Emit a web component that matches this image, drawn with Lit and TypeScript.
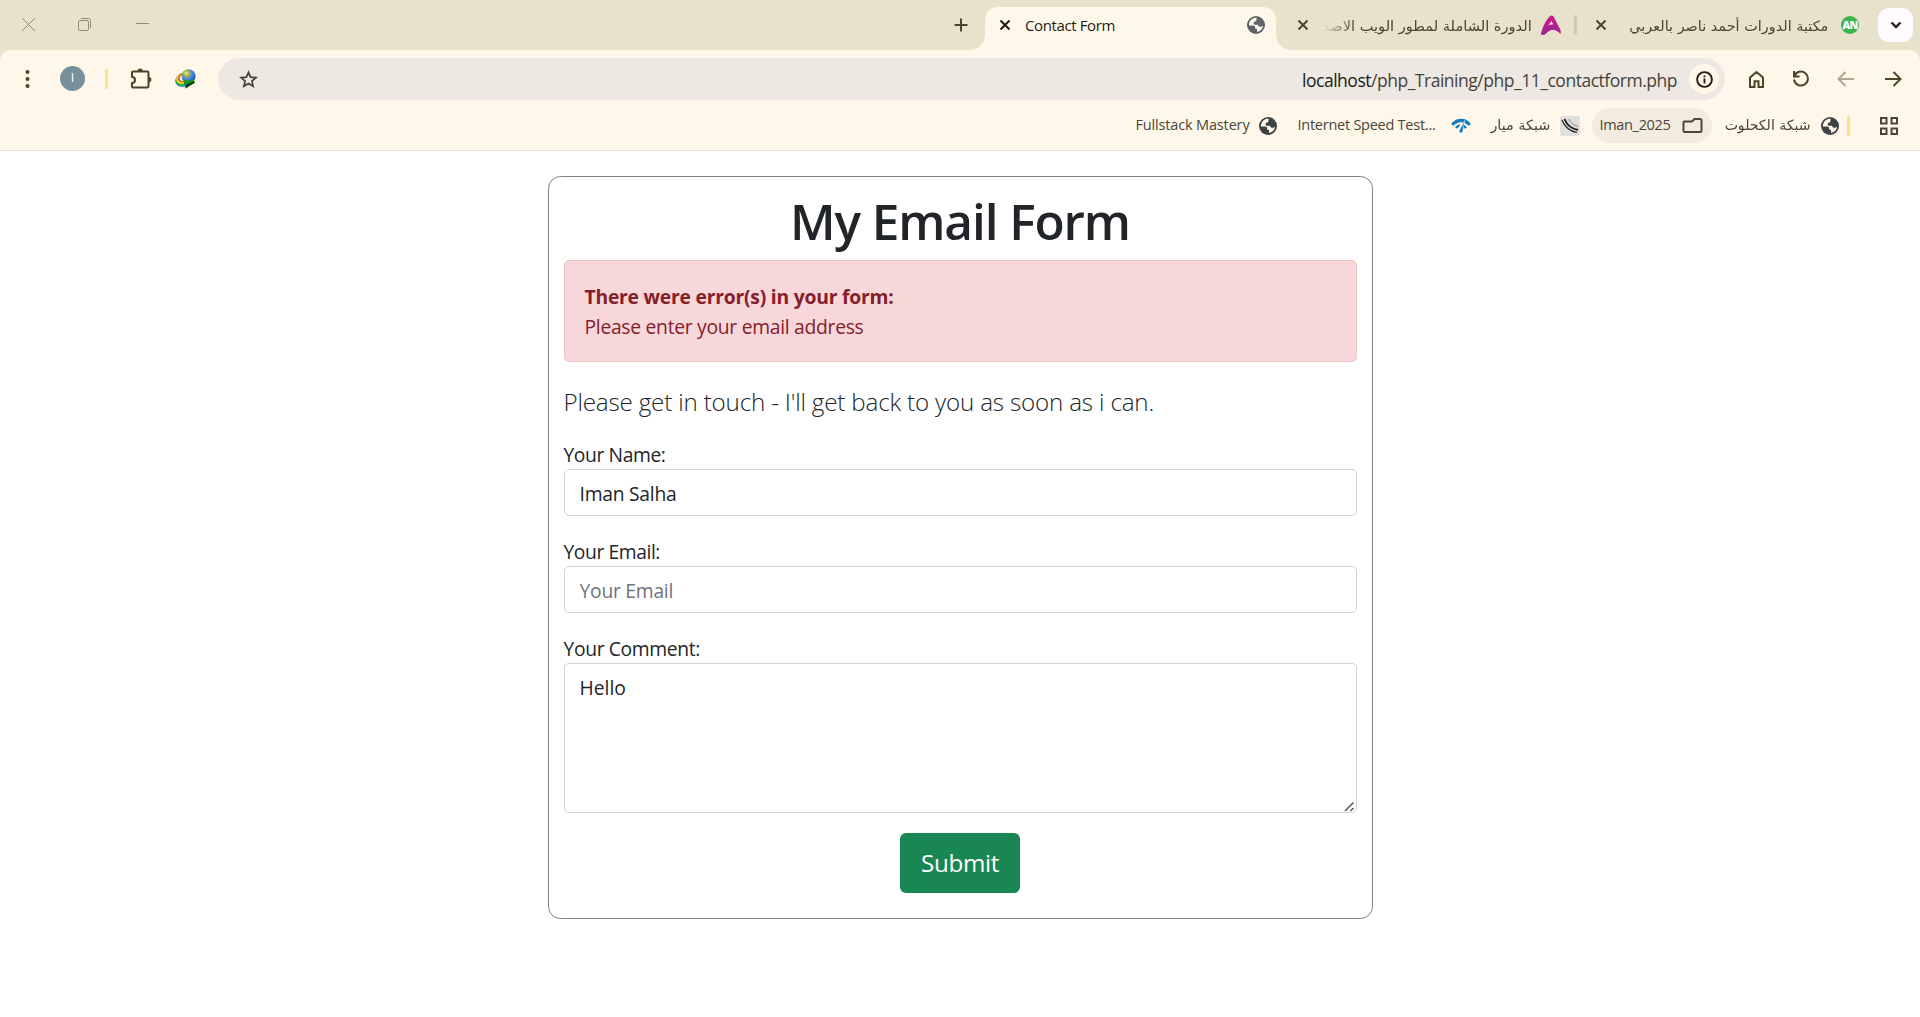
import { LitElement, html, css } from "lit";
import { customElement, property } from "lit/decorators.js";

/** Text run set to an exact advance width: Latin by tracking, Arabic by horizontal scale. */
@customElement("fit-text")
class FitText extends LitElement {
  @property({ type: Number }) w = 0;
  @property({ type: Boolean }) scale = false;
  static styles = css`
    :host { display: block; white-space: nowrap; flex: none; }
    .run { display: inline-block; transform-origin: 0 50%; white-space: pre; }
    :host([scale]) .run { transform-origin: 100% 50%; }
  `;
  render() {
    return html`<span class="run"><slot></slot></span>`;
  }
  firstUpdated() {
    this.fit();
    document.fonts.ready.then(() => this.fit());
  }
  private fit() {
    const run = this.renderRoot.querySelector(".run") as HTMLElement;
    const n = (this.textContent || "").length;
    run.style.letterSpacing = "normal";
    run.style.transform = "none";
    const natural = run.getBoundingClientRect().width;
    if (!natural) return;
    if (this.scale) run.style.transform = `scaleX(${this.w / natural})`;
    else run.style.letterSpacing = `${(this.w - natural) / n}px`;
    this.style.width = `${this.w}px`;
  }
}

const globe = (color: string, bg: string) => html`<svg class="ico" width="18" height="18" viewBox="0 0 18 18">
  <circle cx="9" cy="9" r="9" fill=${color} />
  <path fill=${bg} d="M9.800 1.900C6.500 1.500 3.800 3.300 2.600 5.800C2 7.200 1.800 8.500 2 9.600H5.800C7.400 9.600 8.200 10.400 8.200 11.900V12.800H10V15.900C13.300 15.500 15.900 12.800 16 9.800C15.200 10.500 14.600 10.800 13.700 10.800C12.100 10.800 11.200 9.900 11 8.700H7.600C6.900 8.700 6.600 8.300 6.600 7.600C6.600 6 7.600 5.300 9 5.300H9.300V3.700Z" />
</svg>`;

const cross = html`<svg class="ico" width="12" height="12" viewBox="0 0 12 12"><path d="M1.500 1.500L10.500 10.500M10.500 1.500L1.500 10.500" stroke="currentColor" stroke-width="2" fill="none" /></svg>`;

@customElement("tab-strip")
class TabStrip extends LitElement {
  static styles = css`
    :host { display: flex; height: 50px; align-items: center; background: #e8e2ca; color: #4b4532; font-size: 15px; line-height: 20px; }
    .ico { display: block; flex: none; }
    .win { display: flex; gap: 42px; padding-left: 21px; margin-top: -1px; color: #918b7a; }
    .plus { margin-left: 804px; color: #4b4532; }
    .tab { display: flex; align-items: center; }
    .active { position: relative; margin-left: 17px; width: 290.5px; height: 43px; margin-top: 7px; box-sizing: border-box; padding: 0 11px 7px 14px; background: #fff8ea; border-radius: 13px 13px 0 0; color: #1f1c13; }
    .active::before, .active::after { content: ""; position: absolute; bottom: 0; width: 15px; height: 15px; }
    .active::before { left: -15px; background: radial-gradient(circle at 0 0, transparent 14.500px, #fff8ea 15.200px); }
    .active::after { right: -15px; background: radial-gradient(circle at 100% 0, transparent 14.500px, #fff8ea 15.200px); }
    .active .title { margin-left: 14px; margin-right: auto; }
    .second { margin-left: 21.500px; }
    .second .title { margin-left: 14px; margin-right: 9px; -webkit-mask-image: linear-gradient(90deg, transparent, #000 32px); }
    .sep { width: 3px; height: 20px; border-radius: 2px; background: #d0c9ba; margin: 0 18px 0 13px; }
    .third .title { margin-left: 22px; margin-right: 13px; }
    .ar { font-family: "DejaVu Sans", sans-serif; font-size: 14px; direction: rtl; margin-top: 1px; }
    .an { width: 18px; height: 18px; border-radius: 50%; background: #3bb54a; color: #fff; font: 800 10.500px/18px "Open Sans", sans-serif; text-align: center; letter-spacing: -0.8px; }
    .drop { display: grid; place-items: center; width: 35px; height: 34px; border-radius: 11px; background: #fffbff; margin-left: 19px; color: #1f1c13; }
  `;
  render() {
    return html`
      <div class="win">
        <svg class="ico" width="15" height="15" viewBox="0 0 15 15"><path d="M1 1L14 14M14 1L1 14" stroke="currentColor" fill="none" /></svg>
        <svg class="ico" width="15" height="15" viewBox="0 0 15 15"><g stroke="currentColor" fill="none"><rect x="0.500" y="3.500" width="10" height="10" rx="1.500" /><path d="M3 1.500H10.500Q12.500 1.500 12.500 3.500V11" /></g></svg>
        <svg class="ico" width="15" height="15" viewBox="0 0 15 15"><path d="M1 6.500H14" stroke="currentColor" /></svg>
      </div>
      <svg class="ico plus" width="14" height="14" viewBox="0 0 14 14"><path d="M7 .5V13.500M.5 7H13.500" stroke="currentColor" stroke-width="2" /></svg>
      <div class="tab active">${cross}<fit-text class="title" w="90">Contact Form</fit-text>${globe("#5f6368", "#fff8ea")}</div>
      <div class="tab second">${cross}<fit-text class="title ar" scale w="209">الدورة الشاملة لمطور الويب الاصد</fit-text>
        <svg class="ico" width="20" height="20" viewBox="0 0 20 20">
          <path d="M0 19C1 13 5 5 9 1C10.500 0 12 .5 12.800 2L19 14C20 16 20 17.500 19.500 19C15 13.500 10 13.500 5 18.500C3 20 1 20 0 19Z" fill="#c41a8c" />
          <path d="M0 19C1 14 7 9 12 9.500C15 10 17.500 13 19.500 19C15 13 9 13 5 18.500C3 20 1 20 0 19Z" fill="#a3238e" />
          <path d="M7.500 10.500L10.300 6L12.400 9.600C10.500 9.300 9 9.600 7.500 10.500Z" fill="#e8e2ca" />
        </svg>
      </div>
      <i class="sep"></i>
      <div class="tab third">${cross}<fit-text class="title ar" scale w="199">مكتبة الدورات أحمد ناصر بالعربي</fit-text><span class="an">AN</span></div>
      <div class="drop"><svg width="12" height="8" viewBox="0 0 12 8"><path d="M1.500 1.500L6 6L10.500 1.500" stroke="currentColor" stroke-width="2.400" fill="none" /></svg></div>
    `;
  }
}

@customElement("tool-bar")
class ToolBar extends LitElement {
  static styles = css`
    :host { display: block; height: 101px; box-sizing: border-box; border-bottom: 1px solid #e6e1d2; background: #fff8ea; border-radius: 11px 11px 0 0; color: #4b4529; }
    .ico { display: block; flex: none; }
    .row { display: flex; align-items: center; height: 58px; box-sizing: border-box; }
    .dots { margin-left: 25px; }
    .avatar { width: 25px; height: 25px; margin-top: -1px; border-radius: 50%; background: #78909c; color: #fff; margin-left: 30px; font: 12.500px/24px "Open Sans", sans-serif; text-align: center; }
    .bar { width: 3px; height: 20px; background: #f5e384; border-radius: 1px; margin-left: 20px; }
    .puzzle { margin-left: 22px; }
    .idm { margin-left: 23px; }
    .omni { display: flex; align-items: center; flex: none; width: 1507px; height: 42px; box-sizing: border-box; border-radius: 21px; background: #ede8e1; margin: 0 23px 0 22px; padding: 0 6px 0 20.500px; color: #45423a; font-size: 17.500px; line-height: 24px; }
    .url { margin-left: auto; display: flex; margin-top: 1px; }
    .host { color: #1a1a17; }
    .info { display: grid; place-items: center; width: 30px; height: 30px; border-radius: 50%; background: #fff8ea; color: #1f1c13; margin-left: 12px; }
    .g { margin-right: 26.500px; }
    .back { opacity: 0.45; }
    .marks { display: flex; align-items: center; justify-content: flex-end; height: 35px; font-size: 14.500px; line-height: 20px; color: #4a4639; }
    .mark { display: flex; align-items: center; gap: 9px; }
    .mark fit-text { margin-top: -1px; }
    .ar { font-family: "DejaVu Sans", sans-serif; font-size: 14px; direction: rtl; }
    .m2 { margin-left: 21px; gap: 15px; }
    .m3 { margin-left: 20px; }
    .m4 { box-sizing: border-box; width: 120px; height: 35px; border-radius: 17.500px; background: #f2ebdf; padding-left: 8px; gap: 11px; margin-left: 12px; }
    .m5 { margin-left: 13.500px; gap: 10px; }
    .marks .bar { margin-left: 8px; }
    .apps { margin: 0 22.500px 0 29.500px; }
  `;
  render() {
    return html`
      <div class="row">
        <svg class="ico dots" width="5" height="18" viewBox="0 0 5 18"><g fill="currentColor"><circle cx="2.500" cy="2" r="2" /><circle cx="2.500" cy="9" r="2" /><circle cx="2.500" cy="16" r="2" /></g></svg>
        <span class="avatar">I</span><i class="bar"></i>
        <svg class="ico puzzle" width="22" height="22" viewBox="0 0 22 22">
          <path d="M2 4.500Q2 3.500 3 3.500H17.500Q18.500 3.500 18.500 4.500V18.500Q18.500 19.500 17.500 19.500H3Q2 19.500 2 18.500V15.200C6 14.700 6 9.300 2 8.800Z" fill="none" stroke="currentColor" stroke-width="2" />
          <path d="M7.500 3a2.700 2.600 0 0 1 5.400 0ZM19 8.900a2.400 2.700 0 0 1 0 5.400Z" fill="currentColor" />
        </svg>
        <svg class="ico idm" width="21" height="20" viewBox="0 0 21 20">
          <defs>
            <radialGradient id="ball" cx=".35" cy=".3" r=".8"><stop offset="0" stop-color="#eef0b0" /><stop offset=".28" stop-color="#9aae3a" /><stop offset=".5" stop-color="#4f8ce6" /><stop offset="1" stop-color="#123a9c" /></radialGradient>
          </defs>
          <path d="M7.500 4C3 5 0 9 .3 13C1 17 5 18.500 10 17.500L13 12L8 11Z" fill="#2878c8" />
          <path d="M7.500 4C3 5 .3 9 .8 12.500C1.500 15.500 5 17.500 9 16.500L10 12Z" fill="#2eb52b" />
          <path d="M7.500 4C3 5 .5 8.500 1.500 11.500C2.500 14.500 6 15.500 9 14.500V11Z" fill="#f5df25" />
          <path d="M7.500 4.300C4 5.200 2.200 8.500 3 10.800C4 13 7 14 9 13V9Z" fill="#e85d27" />
          <path d="M7 5.800C5 7 4.300 9 5 10.500C6 12 8 12.500 9 12V8Z" fill="#fff" />
          <circle cx="13.500" cy="7.200" r="7" fill="url(#ball)" />
          <path d="M8.500 9.500C12 12.500 15.500 12 18 10L20 13.500L10.500 19.500V15.800C9 14 8.500 12 8.500 9.500Z" fill="#159b18" />
          <path d="M10.500 19.500V16L18.500 12L20 13.500Z" fill="#0a4410" />
        </svg>
        <div class="omni">
          <svg class="ico" width="19" height="19" viewBox="0 0 19 19"><path d="M9.500 2.300L11.600 7.100L16.900 7.600L12.900 11.100L14.100 16.300L9.500 13.500L4.900 16.300L6.100 11.100L2.100 7.600L7.400 7.100Z" fill="none" stroke="currentColor" stroke-width="1.700" /></svg>
          <div class="url"><fit-text class="host" w="69">localhost</fit-text><fit-text w="306">/php_Training/php_11_contactform.php</fit-text></div>
          <div class="info"><svg width="17" height="17" viewBox="0 0 17 17"><circle cx="8.500" cy="8.500" r="7.400" fill="none" stroke="currentColor" stroke-width="1.900" /><path d="M8.500 7.600V12.500M8.500 4.400V6.200" stroke="currentColor" stroke-width="1.900" /></svg></div>
        </div>
        <svg class="ico g" width="17" height="19" viewBox="0 0 17 19"><path d="M2 17V7.500L8.500 2L15 7.500V17H10.500V11.200H6.500V17Z" fill="none" stroke="currentColor" stroke-width="2" /></svg>
        <svg class="ico g" width="18" height="18" viewBox="0 0 18 18"><path d="M2.300 6.300A7 7 0 1 1 2 9.500M2 1V6.500H7.500" fill="none" stroke="currentColor" stroke-width="2" /></svg>
        <svg class="ico g back" width="20" height="18" viewBox="0 0 20 18"><path d="M18 9H3M9.500 2L2.500 9L9.500 16" fill="none" stroke="currentColor" stroke-width="2" /></svg>
        <svg class="ico" width="20" height="18" viewBox="0 0 20 18"><path d="M2 9H17M10.500 2L17.500 9L10.500 16" fill="none" stroke="currentColor" stroke-width="2" /></svg>
      </div>
      <div class="marks">
        <div class="mark"><fit-text w="114">Fullstack Mastery</fit-text>${globe("#3f4245", "#fff8ea")}</div>
        <div class="mark m2"><fit-text w="138">Internet Speed Test...</fit-text>
          <svg class="ico" width="20" height="16" viewBox="0 0 20 16"><g fill="#0e7cc4"><path d="M0 6Q4 .8 10 .8Q16 .8 20 6L17.500 7.800Q14.500 4.300 10 4.300Q5.500 4.300 2.500 7.800Z" /><path d="M4 9.500Q6.500 6.300 9.300 6.200L8 9Q7 9.300 6.300 10.700ZM12.800 6.600Q14.500 7.400 16 9.500L13.700 10.700Q13 9.600 12 9.100Z" /><path d="M13.800 2.500L11.800 13.500Q11 15.500 9.300 14.800Q7.600 14 8.300 12.300Z" stroke="#fff8ea" stroke-width=".6" /></g></svg>
        </div>
        <div class="mark m3"><fit-text class="ar" scale w="60">شبكة ميار</fit-text>
          <svg class="ico" width="20" height="20" viewBox="0 0 20 20"><rect width="20" height="20" rx="3" fill="#dededc" /><g fill="none" stroke="#222"><path d="M2 4Q6 14.500 17 16.500" stroke-width="1.200" /><path d="M4.500 3Q8 12 18 14" stroke-width="2" /><path d="M9 3Q11 8.500 18 10.500" stroke-width="1" stroke="#888" /></g></svg>
        </div>
        <div class="mark m4"><fit-text w="71">Iman_2025</fit-text>
          <svg class="ico" width="21" height="17" viewBox="0 0 21 17"><path d="M2.500 4.500H10L12.500 2H18Q19.500 2 19.500 3.500V13.500Q19.500 15 18 15H3Q1.500 15 1.500 13.500V5.500Q1.500 4.500 2.500 4.500Z" fill="none" stroke="currentColor" stroke-width="2" /></svg>
        </div>
        <div class="mark m5"><fit-text class="ar" scale w="86">شبكة الكحلوت</fit-text>${globe("#3f4245", "#fff8ea")}</div>
        <i class="bar"></i>
        <svg class="ico apps" width="18" height="18" viewBox="0 0 18 18"><g fill="none" stroke="currentColor" stroke-width="2"><rect x="1" y="1" width="5.500" height="5.500" /><rect x="11.500" y="1" width="5.500" height="5.500" /><rect x="1" y="11.500" width="5.500" height="5.500" /><rect x="11.500" y="11.500" width="5.500" height="5.500" /></g></svg>
      </div>
    `;
  }
}

@customElement("email-form")
class EmailForm extends LitElement {
  static styles = css`
    :host { display: block; box-sizing: border-box; width: 825px; height: 743px; margin: 25px auto 0; padding: 14px 15px 0; border: 1px solid #808080; border-radius: 12.500px; color: #212529; font-size: 19.300px; line-height: 30px; }
    h1 { display: flex; justify-content: center; margin: 0 0 9px; font-size: 49.500px; font-weight: 600; line-height: 60px; }
    .alert { box-sizing: border-box; height: 102px; padding: 21px 20px 19px; border: 1px solid #f5c2c7; border-radius: 5px; background: #f8d7da; color: #842029; }
    .bold { font-weight: 700; }
    .lead { margin: 20px 0 19px; font-size: 24.200px; font-weight: 300; line-height: 39px; }
    label { display: block; }
    .field { display: block; box-sizing: border-box; width: 100%; height: 47px; margin: 0 0 20px; border: 1px solid #ced4da; border-radius: 5px; padding: 8px 15px 6px; background: #fff; color: #212529; font: inherit; outline: none; resize: none; letter-spacing: -0.25px; }
    label + .field { margin-top: -1px; margin-bottom: 21px; }
    .field::placeholder { color: #6c757d; opacity: 1; }
    .wrap { position: relative; margin-top: -1px; }
    .wrap .area { height: 150px; padding-top: 9px; overflow: hidden; letter-spacing: 0; }
    .grip { position: absolute; right: 2px; bottom: 1px; }
    button { display: flex; justify-content: center; align-items: center; width: 120px; height: 60px; margin: 0 auto; padding: 0; border: 0; border-radius: 6px; background: #198754; color: #fff; font: inherit; font-size: 24.200px; line-height: 36px; }
  `;
  render() {
    return html`
      <h1><fit-text w="340">My Email Form</fit-text></h1>
      <div class="alert">
        <fit-text class="bold" w="309">There were error(s) in your form:</fit-text>
        <fit-text w="279">Please enter your email address</fit-text>
      </div>
      <div class="lead"><fit-text w="590.5">Please get in touch - I'll get back to you as soon as i can.</fit-text></div>
      <label><fit-text w="102">Your Name:</fit-text></label>
      <input class="field" .value=${"Iman Salha"} />
      <label><fit-text w="96.5">Your Email:</fit-text></label>
      <input class="field" placeholder="Your Email" />
      <label><fit-text w="136.5">Your Comment:</fit-text></label>
      <div class="wrap">
        <textarea class="field area" .value=${"Hello"}></textarea>
        <svg class="grip" width="11" height="11" viewBox="0 0 11 11"><path d="M1 10L9.500 1.500M6.500 10L9.500 7" stroke="#555" stroke-width="1.500" /></svg>
      </div>
      <button type="button"><fit-text w="78">Submit</fit-text></button>
    `;
  }
}

@customElement("app-root")
class AppRoot extends LitElement {
  static styles = css`
    :host { display: block; width: 1920px; height: 1017px; overflow: hidden; background: #fff; font-family: "Open Sans", "Noto Sans", "DejaVu Sans", sans-serif; }
    .chrome { background: #e8e2ca; }
  `;
  render() {
    return html`<div class="chrome"><tab-strip></tab-strip><tool-bar></tool-bar></div><email-form></email-form>`;
  }
}
